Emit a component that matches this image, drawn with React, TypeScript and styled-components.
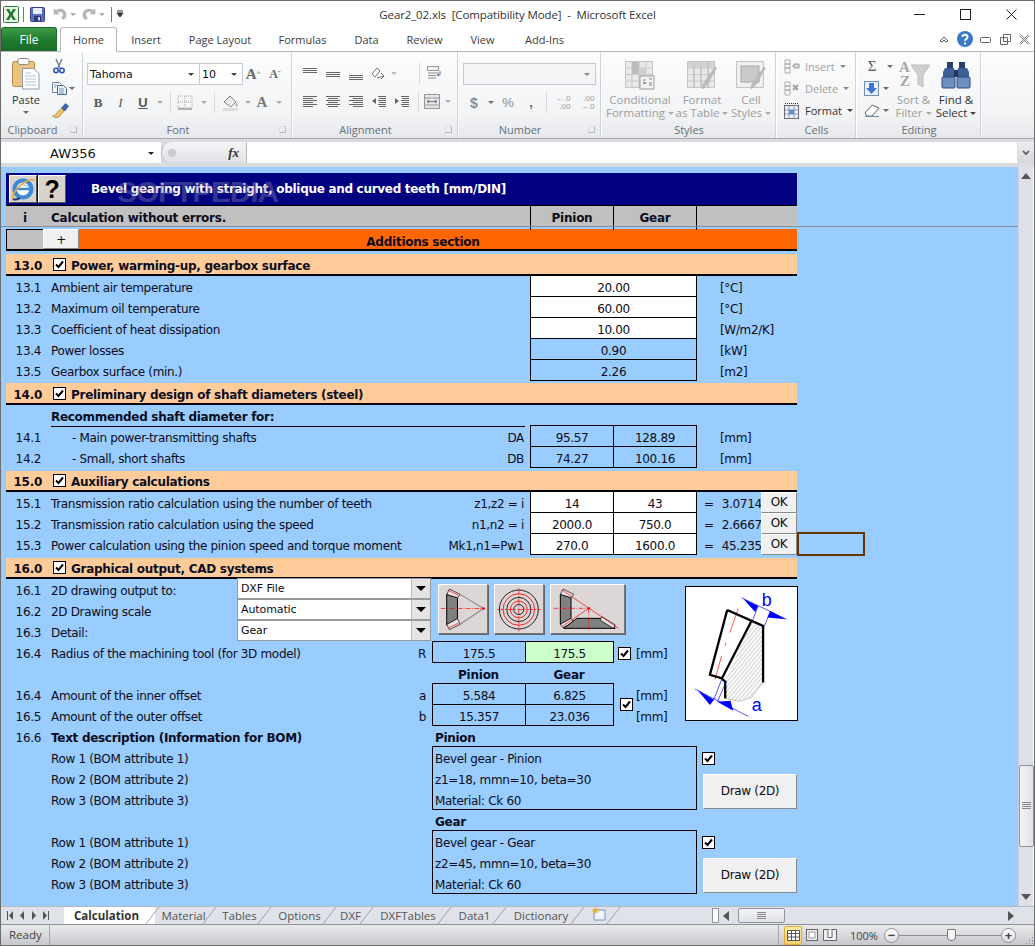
import React from 'react'
import styled, { createGlobalStyle } from 'styled-components'

const GlobalStyle = createGlobalStyle`
  * { box-sizing: border-box; }
  html, body { margin: 0; padding: 0; overflow: hidden; background: #fff; }
  body { font-family: "Open Sans", "Noto Sans", sans-serif; }
`

const Win = styled.div`
  width: 1035px;
  height: 946px;
  border: 1px solid #6d6d6d;
  display: flex;
  flex-direction: column;
  background: #fff;
  overflow: hidden;
`

/* ---------- title bar ---------- */
const TitleBar = styled.div`
  height: 26px;
  flex: none;
  display: grid;
  grid-template-columns: 1fr auto 1fr;
  align-items: center;
  background: #fff;
`
const Quick = styled.div`
  display: flex;
  align-items: center;
  height: 26px;
`
const TitleText = styled.div`
  font-size: 11.5px;
  letter-spacing: -0.12px;
  color: #333;
  white-space: pre;
`
const WinControls = styled.div`
  display: flex;
  justify-content: flex-end;
  height: 26px;
`
const WinBtn = styled.div`
  width: 46px;
  display: flex;
  align-items: center;
  justify-content: center;
`

/* ---------- slots used for every small ribbon item ---------- */
const Slot = styled.div<{ $w: number; $dim?: boolean }>`
  width: ${p => p.$w}px;
  height: 21px;
  flex: none;
  display: flex;
  align-items: center;
  justify-content: center;
  color: ${p => (p.$dim ? '#9a9a9a' : '#444')};
`
const Caret = styled.span<{ $c?: string; $big?: boolean }>`
  display: inline-block;
  width: 0;
  height: 0;
  vertical-align: middle;
  border-left: ${p => (p.$big ? 5 : 3)}px solid transparent;
  border-right: ${p => (p.$big ? 5 : 3)}px solid transparent;
  border-top: ${p => (p.$big ? 5 : 3)}px solid ${p => p.$c || '#6a6a6a'};
`
const Sep = styled.div<{ $w: number }>`
  width: ${p => p.$w}px;
  height: 21px;
  flex: none;
  border-right: 1px solid #d6d8dc;
`
const FontGlyph = styled.span<{ $size: number; $bold?: boolean; $italic?: boolean; $under?: boolean; $serif?: boolean; $c?: string }>`
  font-family: ${p => (p.$serif ? '"Liberation Serif", serif' : '"Liberation Sans", sans-serif')};
  font-size: ${p => p.$size}px;
  font-weight: ${p => (p.$bold ? 700 : 400)};
  font-style: ${p => (p.$italic ? 'italic' : 'normal')};
  text-decoration: ${p => (p.$under ? 'underline' : 'none')};
  color: ${p => p.$c || '#555'};
  line-height: 1;
`

/* ---------- ribbon tabs ---------- */
const TabStrip = styled.div`
  height: 25px;
  flex: none;
  display: flex;
  align-items: stretch;
  background: #fff;
  border-bottom: 1px solid #b4b7bc;
  position: relative;
`
const FileTab = styled.div`
  width: 56px;
  margin-right: 3px;
  background: linear-gradient(#3f9a47, #1e7a2c 55%, #1c6a28);
  color: #fff;
  border: 1px solid #1c6a28;
  border-bottom: none;
  border-radius: 3px 3px 0 0;
  font-size: 12px;
  display: flex;
  align-items: center;
  justify-content: center;
`
const RibbonTab = styled.div<{ $w: number; $on?: boolean }>`
  width: ${p => p.$w}px;
  flex: none;
  font-size: 11px;
  color: #3c3c3c;
  display: flex;
  align-items: center;
  justify-content: center;
  background: ${p => (p.$on ? '#fff' : 'transparent')};
  border: ${p => (p.$on ? '1px solid #b4b7bc' : 'none')};
  border-bottom: ${p => (p.$on ? '1px solid #fff' : 'none')};
  border-radius: 3px 3px 0 0;
  height: ${p => (p.$on ? '25px' : 'auto')};
`
const HelpIcons = styled.div`
  margin-left: auto;
  display: flex;
  align-items: center;
  padding-right: 4px;
`

/* ---------- ribbon ---------- */
const Ribbon = styled.div`
  height: 87px;
  flex: none;
  display: flex;
  background: linear-gradient(#fbfcfc, #f3f4f6 70%, #e6e8ec);
  border-bottom: 1px solid #a6a9ae;
`
const Group = styled.div<{ $w: number }>`
  width: ${p => p.$w}px;
  flex: none;
  display: flex;
  flex-direction: column;
  border-right: 1px solid #d0d3d8;
  box-shadow: 1px 0 0 #fff;
`
const GroupBody = styled.div<{ $pl?: number }>`
  height: 69px;
  flex: none;
  padding-left: ${p => p.$pl || 0}px;
  display: flex;
`
const GroupLabel = styled.div<{ $launch?: boolean }>`
  flex: 1;
  position: relative;
  text-align: center;
  font-size: 11px;
  line-height: 17px;
  padding-left: ${p => (p.$launch ? 0 : 2)}px;
  padding-right: ${p => (p.$launch ? 18 : 0)}px;
  color: #66707c;
`
const Launcher = styled.span`
  position: absolute;
  right: 5px;
  top: 5px;
  width: 7px;
  height: 7px;
  border: 1px solid #b7babf;
  border-top-color: #dcdee2;
  border-left-color: #dcdee2;
`
const Stack = styled.div<{ $gap?: number; $top?: number }>`
  display: flex;
  flex-direction: column;
  gap: ${p => p.$gap || 0}px;
  padding-top: ${p => p.$top || 0}px;
`
const SmallStack = styled(Stack)`
  margin-left: 3px;
`
const NarrowStack = styled(Stack)`
  width: 28px;
`
const Line = styled.div`
  display: flex;
  align-items: center;
`
const PasteBtn = styled.div`
  width: 44px;
  margin-left: 3px;
  display: flex;
  flex-direction: column;
  align-items: center;
  padding-top: 6px;
  font-size: 11px;
  color: #333;
`
const PasteText = styled.div`
  margin-top: 3px;
  line-height: 14px;
  margin-bottom: 4px;
`
const Combo = styled.div<{ $w: number; $off?: boolean }>`
  width: ${p => p.$w}px;
  height: 22px;
  flex: none;
  background: ${p => (p.$off ? '#f3f4f6' : '#fff')};
  border: 1px solid #c7cad0;
  margin-right: -1px;
  display: flex;
  align-items: center;
  justify-content: space-between;
  padding: 0 5px 0 2px;
  font-family: "DejaVu Sans", sans-serif;
  font-size: 11px;
  color: #111;
`
const BigBtn = styled.div<{ $w: number; $dim?: boolean }>`
  width: ${p => p.$w}px;
  flex: none;
  display: flex;
  flex-direction: column;
  align-items: center;
  padding-top: 7px;
  font-size: 11.5px;
  line-height: 13px;
  color: ${p => (p.$dim ? '#9c9c9c' : '#333')};
`
const BigIcon = styled.div`
  height: 32px;
  margin-bottom: 2px;
  display: flex;
  align-items: center;
`
const BigText = styled.div`
  white-space: nowrap;
  text-align: center;
`
const CellLine = styled.div<{ $dim?: boolean; $gap?: number }>`
  height: 22px;
  display: flex;
  align-items: center;
  gap: ${p => p.$gap || 5}px;
  font-size: 11px;
  color: ${p => (p.$dim ? '#a0a0a0' : '#333')};
`
const DecimalGlyph = styled.span`
  font-family: "Liberation Sans", sans-serif;
  font-size: 8px;
  line-height: 8px;
  color: #999;
  text-align: right;
`

/* ---------- formula bar ---------- */
const Strip = styled.div<{ $h: number }>`
  height: ${p => p.$h}px;
  flex: none;
  background: #d9dbdf;
`
const FormulaBar = styled.div`
  height: 21px;
  flex: none;
  display: flex;
  background: #d9dbdf;
`
const NameBox = styled.div`
  width: 160px;
  flex: none;
  background: #fff;
  padding: 1px 7px 0 49px;
  display: flex;
  align-items: center;
  justify-content: space-between;
  font-family: "DejaVu Sans", sans-serif;
  font-size: 13px;
  color: #111;
`
const FxPill = styled.div`
  width: 85px;
  flex: none;
  background: linear-gradient(#f4f5f7, #dfe1e5);
  border-radius: 10px 0 0 10px;
  border-left: 1px solid #b4b7bc;
  display: flex;
  align-items: center;
  justify-content: space-between;
  padding: 0 7px 0 6px;
`
const FxDot = styled.span`
  width: 8px;
  height: 8px;
  border-radius: 50%;
  background: #c9cbcf;
`
const FxText = styled.span`
  font-family: "Liberation Serif", serif;
  font-style: italic;
  font-weight: 700;
  font-size: 13px;
  color: #333;
`
const FormulaInput = styled.div`
  flex: 1;
  background: #fff;
  border-left: 1px solid #b4b7bc;
`
const FormulaExpand = styled.div`
  width: 16px;
  flex: none;
  margin-left: 1px;
  background: linear-gradient(#eceef1, #d5d8dc);
  display: flex;
  align-items: center;
  justify-content: center;
`

/* ---------- worksheet ---------- */
const SheetWrap = styled.div`
  height: 739px;
  flex: none;
  display: flex;
  position: relative;
`
const Sheet = styled.div`
  flex: 1;
  background: #99ccff;
  padding: 6px 0 0 5px;
  position: relative;
  overflow: hidden;
  font-family: "DejaVu Sans", sans-serif;
  font-size: 12px;
  color: #0c0c20;
  letter-spacing: -0.33px;
`
const FrozenLine = styled.div`
  position: absolute;
  left: 0;
  right: 0;
  top: 59px;
  height: 1px;
  background: #8b8f96;
`
const Watermark = styled.div`
  position: absolute;
  left: 116px;
  top: 8px;
  font-family: "Liberation Sans", sans-serif;
  font-weight: 700;
  font-size: 30px;
  letter-spacing: -1.2px;
  line-height: 34px;
  color: rgba(130, 130, 175, 0.42);
`
const Board = styled.div`
  width: 791px;
`
const TitleRow = styled.div`
  height: 33px;
  background: #000080;
  border-bottom: 1px solid #000;
  display: flex;
  align-items: center;
  padding-left: 3px;
`
const FaceBtn = styled.div`
  width: 28px;
  height: 28px;
  margin-right: 1px;
  background: #d8d4cc;
  border: 1px solid;
  border-color: #fff #555 #555 #fff;
  display: flex;
  align-items: center;
  justify-content: center;
  font-family: "Liberation Sans", sans-serif;
  font-weight: 700;
  font-size: 25px;
  color: #000;
`
const TitleCaption = styled.div`
  margin-left: 24px;
  font-weight: 700;
  color: #fff;
  letter-spacing: -0.3px;
`
const HeadRow = styled.div`
  height: 21px;
  background: #c0c0c0;
  display: grid;
  grid-template-columns: 45px 479px 83px 83px 1fr;
  line-height: 24px;
  font-weight: 700;
  letter-spacing: -0.25px;
`
const HeadInfo = styled.div`
  text-align: center;
  padding-right: 7px;
`
const HeadCol = styled.div`
  text-align: center;
  border-left: 1px solid #000;
`
const AddRow = styled.div`
  margin-top: 2px;
  height: 22px;
  display: flex;
  background: #ff6600;
  border-bottom: 2px solid #000;
`
const AddGrey = styled.div`
  width: 37px;
  background: #c0c0c0;
  border-top: 1px solid #000;
  border-left: 1px solid #000;
`
const AddBtn = styled.div`
  width: 36px;
  background: #f0f0f0;
  border: 1px solid;
  border-color: #fff #888 #888 #fff;
  text-align: center;
  line-height: 20px;
`
const AddTitle = styled.div`
  flex: 1;
  text-align: center;
  font-weight: 700;
  padding-right: 30px;
  line-height: 26px;
  letter-spacing: -0.25px;
`
const Section = styled.div<{ $gap: number; $h: number }>`
  margin-top: ${p => p.$gap}px;
  height: ${p => p.$h}px;
  background: #ffcc99;
  border-bottom: 2px solid #000;
  display: flex;
  align-items: center;
  font-weight: 700;
  letter-spacing: -0.28px;
`
const SectionNum = styled.div`
  width: 47px;
  text-align: right;
  padding-right: 11px;
  padding-top: 3px;
`
const SectionTitle = styled.div`
  margin-left: 5px;
  padding-top: 3px;
`
const CheckBox = styled.span`
  width: 13px;
  height: 13px;
  flex: none;
  background: #fff;
  border: 1px solid #000;
  display: inline-flex;
  align-items: center;
  justify-content: center;
`
const LowCheck = styled(CheckBox)`
  margin-top: 18px;
  margin-right: -2px;
`
const Row = styled.div`
  height: 21px;
  line-height: 24px;
  display: grid;
  grid-template-columns: 45px 479px 83px 83px 1fr;
  position: relative;
  white-space: nowrap;
`
const Num = styled.div`
  text-align: right;
  padding-right: 10px;
`
const Label = styled.div<{ $indent?: number }>`
  display: flex;
  justify-content: space-between;
  padding-right: 6px;
  padding-left: ${p => p.$indent || 0}px;
`
const SubHead = styled.div`
  font-weight: 700;
  letter-spacing: -0.3px;
  grid-column: span 2;
  height: 22px;
  border-bottom: 1px solid #000;
  width: 474px;
`
const Cell = styled.div<{ $span?: number; $fill?: string }>`
  grid-column: span ${p => p.$span || 1};
  height: 22px;
  margin-top: -1px;
  margin-right: -1px;
  border: 1px solid #000;
  background: ${p => p.$fill || 'transparent'};
  text-align: center;
  line-height: 24px;
`
const Unit = styled.div`
  padding-left: 24px;
`
const Result = styled.div`
  display: flex;
  padding-left: 8px;
  gap: 8px;
`
const OkBtn = styled.div`
  position: absolute;
  right: 0;
  top: 0;
  width: 36px;
  height: 21px;
  background: #f0f0f0;
  border: 1px solid;
  border-color: #fff #888 #888 #fff;
  text-align: center;
  line-height: 19px;
`
const ActiveCell = styled.div`
  position: absolute;
  left: 791px;
  top: -2px;
  width: 68px;
  height: 24px;
  border: 2px solid #663300;
`

/* section 16 */
const CadBlock = styled.div`
  display: flex;
  align-items: flex-start;
`
const CadLeft = styled.div`
  width: 680px;
  flex: none;
`
const CadTop = styled.div`
  display: flex;
  height: 63px;
`
const ComboRow = styled.div`
  height: 21px;
  line-height: 24px;
  display: grid;
  grid-template-columns: 45px 186px 194px;
  white-space: nowrap;
`
const SheetCombo = styled.div`
  height: 21px;
  margin-top: -1px;
  background: #fff;
  border: 1px solid #9a9a9a;
  display: flex;
  justify-content: space-between;
  font-size: 11px;
  letter-spacing: -0.1px;
  line-height: 20px;
  padding-left: 3px;
`
const ComboArrow = styled.div`
  width: 19px;
  background: #e4e4e4;
  border-left: 1px solid #bbb;
  display: flex;
  align-items: center;
  justify-content: center;
`
const ShapeBtns = styled.div`
  margin: 5px 0 0 7px;
  display: flex;
  gap: 6px;
`
const ShapeBtn = styled.div`
  height: 50px;
  background: #dcd6d6;
  border: 1px solid;
  border-color: #fff #777 #777 #fff;
  box-shadow: 1px 1px 0 #666;
  display: flex;
`
const ToolRow = styled.div`
  height: 21px;
  line-height: 24px;
  display: grid;
  grid-template-columns: 45px 381px 93px 88px 1fr;
  white-space: nowrap;
`
const HeadMid = styled.div`
  font-weight: 700;
  text-align: center;
  letter-spacing: -0.25px;
`
const UnitInline = styled.div<{ $pl: number; $gap?: number }>`
  display: flex;
  align-items: center;
  gap: ${p => p.$gap || 5}px;
  padding-left: ${p => p.$pl}px;
  padding-top: 2px;
  height: 21px;
`
const Diagram = styled.div`
  margin-top: 7px;
  width: 113px;
  height: 135px;
  background: #fff;
  border: 1px solid #000;
  margin-left: -1px;
  display: flex;
`
const BomRow = styled.div`
  height: 21px;
  line-height: 24px;
  display: grid;
  grid-template-columns: 45px 381px 1fr;
  white-space: nowrap;
`
const BomBlock = styled.div`
  display: flex;
  align-items: flex-start;
`
const BomLabels = styled.div`
  width: 426px;
  flex: none;
`
const BomLabelRow = styled.div`
  height: 21px;
  line-height: 24px;
  padding-left: 45px;
`
const BomBox = styled.div`
  width: 265px;
  height: 64px;
  flex: none;
  margin-top: -1px;
  border: 1px solid #000;
  padding: 2px 0 0 2px;
  line-height: 21px;
`
const BomSide = styled.div`
  flex: none;
  padding: 5px 0 0 5px;
  display: flex;
  flex-direction: column;
  align-items: flex-start;
`
const DrawBtn = styled.div`
  width: 94px;
  height: 35px;
  margin: 9px 0 0 1px;
  background: #f0f0f0;
  border: 1px solid;
  border-color: #fff #888 #888 #fff;
  text-align: center;
  line-height: 33px;
`
const BomHead = styled.div`
  font-weight: 700;
  letter-spacing: -0.3px;
`
const BomTitle = styled(BomHead)`
  padding-left: 3px;
`

/* vertical scroll bar */
const VScroll = styled.div`
  width: 15px;
  flex: none;
  margin-right: 1px;
  background: #dde0e7;
  display: flex;
  flex-direction: column;
  align-items: center;
  border-left: 1px solid #cfd2d8;
`
const ScrollEnd = styled.div`
  height: 18px;
  flex: none;
  display: flex;
  align-items: center;
  justify-content: center;
`
const VTrack = styled.div`
  flex: 1;
  width: 100%;
  padding-top: 580px;
`
const VThumb = styled.div`
  width: 15px;
  height: 82px;
  background: linear-gradient(90deg, #f3f4f7, #dfe2e8);
  border: 1px solid #8e939c;
  border-radius: 2px;
  display: flex;
  align-items: center;
  justify-content: center;
`

/* sheet tabs */
const TabsBar = styled.div`
  height: 18px;
  flex: none;
  display: flex;
  background: #dfe2e8;
  border-top: 1px solid #b6b9bf;
  font-size: 11.5px;
  color: #444;
`
const NavArrows = styled.div`
  width: 63px;
  flex: none;
  display: flex;
  align-items: center;
  gap: 4px;
  padding-left: 5px;
`
const SheetTab = styled.div<{ $w: number; $on?: boolean }>`
  width: ${p => p.$w}px;
  flex: none;
  position: relative;
  text-align: center;
  line-height: 17px;
  padding-right: ${p => (p.$on ? 6 : 0)}px;
  font-weight: ${p => (p.$on ? 700 : 400)};
  background: ${p => (p.$on ? '#fff' : 'transparent')};
  color: ${p => (p.$on ? '#333' : '#555')};
  &::after {
    content: '';
    position: absolute;
    right: 2px;
    top: 0;
    width: 1px;
    height: 17px;
    background: #9ea2a8;
    transform: skewX(-38deg);
  }
`
const TabFill = styled.div`
  flex: 1;
  min-width: 0;
`
const Splitter = styled.div`
  width: 7px;
  height: 15px;
  margin-top: 1px;
  background: #fff;
  border: 1px solid #8e939c;
`
const HScroll = styled.div`
  width: 315px;
  flex: none;
  display: flex;
  align-items: center;
`
const HThumb = styled.div`
  width: 47px;
  height: 15px;
  margin-left: 5px;
  background: linear-gradient(#f3f4f7, #dfe2e8);
  border: 1px solid #8e939c;
  border-radius: 2px;
  display: flex;
  align-items: center;
  justify-content: center;
`

/* status bar */
const StatusBar = styled.div`
  flex: 1;
  display: flex;
  align-items: center;
  background: linear-gradient(#e9eaec, #c6c8cc);
  border-top: 1px solid #8f9196;
  font-size: 11.5px;
  color: #444;
`
const Ready = styled.div`
  width: 49px;
  height: 100%;
  padding-left: 8px;
  line-height: 20px;
  border-right: 1px solid #a4a6aa;
`
const ViewGroup = styled.div`
  margin-left: auto;
  height: 100%;
  display: flex;
  align-items: center;
  border-left: 1px solid #a4a6aa;
  padding-left: 5px;
`
const ViewBtn = styled.div<{ $on?: boolean }>`
  width: 18px;
  height: 19px;
  margin-right: ${p => (p.$on ? 1 : 0)}px;
  border-radius: 2px;
  border: ${p => (p.$on ? '1px solid #e0a93c' : '1px solid transparent')};
  background: ${p => (p.$on ? 'linear-gradient(#fde9a8,#fbd26a)' : 'transparent')};
  display: flex;
  align-items: center;
  justify-content: center;
`
const Zoom = styled.div`
  width: 34px;
  margin-left: 11px;
  font-size: 11px;
  color: #444;
`
const ZoomBtn = styled.div`
  width: 15px;
  height: 15px;
  flex: none;
  border-radius: 50%;
  border: 1px solid #8d9095;
  background: linear-gradient(#fff, #dcdee2);
  display: flex;
  align-items: center;
  justify-content: center;
  font-weight: 700;
  font-size: 13px;
  line-height: 1;
  color: #444;
`
const ZoomTrack = styled.div`
  width: 102px;
  height: 1px;
  background: #8d9095;
  position: relative;
`
const ZoomThumb = styled.div`
  position: absolute;
  left: 48px;
  top: -6px;
  width: 9px;
  height: 12px;
  background: #f5f5f5;
  border: 1px solid #777;
  border-radius: 1px 1px 4px 4px;
`
const Grip = styled.div`
  width: 18px;
  height: 100%;
  display: flex;
  align-items: flex-end;
  justify-content: flex-end;
`
const QuickSep = styled.span<{ $ml: number; $mr: number }>`
  width: 1px;
  height: 15px;
  background: #777;
  margin: 0 ${p => p.$mr}px 0 ${p => p.$ml}px;
`

/* ---------- icons ---------- */
const ExcelLogo = () => (
  <svg width="16" height="17" viewBox="0 0 16 17" style={{ margin: '0 3px 0 2px' }}>
    <rect x=".5" y=".5" width="15" height="16" rx="1" fill="#eaf4e6" stroke="#2f7a37" />
    <path d="M3 3h3l2 3.5L10 3h3L9.6 8.5 13 14h-3L8 10.5 6 14H3l3.4-5.5z" fill="#1f7a2d" />
  </svg>
)
const SaveIcon = () => (
  <svg width="15" height="15" viewBox="0 0 15 15">
    <rect x=".5" y=".5" width="14" height="14" rx="1" fill="#5a6fc0" stroke="#36418a" />
    <rect x="3" y="1" width="9" height="6" fill="#e9eefb" />
    <rect x="4" y="9" width="7" height="5.5" fill="#2f3a7c" />
    <rect x="8" y="10" width="2" height="3.5" fill="#cfd6ee" />
  </svg>
)
const UndoIcon = ({ flip }: { flip?: boolean }) => (
  <svg width="14" height="14" viewBox="0 0 14 14" style={flip ? { transform: 'scaleX(-1)' } : undefined}>
    <path d="M1 2v5h5L4.3 5.3C6 4 9 4.2 10 6.5c.6 1.6 0 3.4-1.6 4.6l2.4 1.5C13 11 13.7 8 12.5 5.3 11 2 6.5 1 3.2 3.6z" fill="#b6b8bb" stroke="#a3a5a8" strokeWidth=".5" />
  </svg>
)
const Cut = () => (
  <svg width="12" height="15" viewBox="0 0 12 15">
    <path d="M3 0l4 9M9 0L5 9" stroke="#6d7f95" strokeWidth="1.4" fill="none" />
    <circle cx="3" cy="11.5" r="2.2" fill="#fff" stroke="#2a50c0" strokeWidth="1.5" />
    <circle cx="9" cy="11.5" r="2.2" fill="#fff" stroke="#2a50c0" strokeWidth="1.5" />
  </svg>
)
const Copy = () => (
  <svg width="15" height="13" viewBox="0 0 15 13">
    <path d="M.5.5h7l2 2v8h-9z" fill="#fff" stroke="#6a86b0" />
    <path d="M5.5 3.5h6l3 3v6h-9z" fill="#eaf1fb" stroke="#4a6a9c" />
    <path d="M7 7h5M7 9h5M7 11h5M2 3h3M2 5h2" stroke="#7d94b8" />
  </svg>
)
const Painter = () => (
  <svg width="17" height="15" viewBox="0 0 17 15">
    <path d="M10 5l2 3-5 6c-2 1-5 .5-6.5-1 2 0 3-1 4-3z" fill="#eac668" stroke="#a07c2c" strokeWidth=".7" />
    <path d="M9.5 5l4-4.5 3 2.5-3.5 5z" fill="#3e62b0" stroke="#2b4a8a" strokeWidth=".6" />
  </svg>
)
const PasteIcon = () => (
  <svg width="28" height="32" viewBox="0 0 28 32">
    <rect x=".5" y="3.5" width="22" height="25" rx="2" fill="#edc27a" stroke="#b38a4a" />
    <rect x="6" y=".5" width="11" height="6" rx="1.5" fill="#fafafa" stroke="#8d8d8d" />
    <path d="M10.5 10.5h11l5.5 5v15.5h-16.5z" fill="#fff" stroke="#8d9bb0" />
    <path d="M13 15h6M13 18h11M13 21h11M13 24h11M13 27h11" stroke="#b7c1d0" />
  </svg>
)
const Bars = ({ kind }: { kind: 'top' | 'mid' | 'bot' | 'l' | 'c' | 'r' | 'in' | 'out' }) => {
  const ys = kind === 'top' ? [2, 4, 6] : kind === 'mid' ? [6, 8, 10] : kind === 'bot' ? [9, 11, 13] : [2, 4, 6, 8, 10, 12]
  const long = (i: number) => i % 2 === 0
  return (
    <svg width="16" height="15" viewBox="0 0 16 15">
      {ys.map((y, i) => {
        let x1 = 1
        let x2 = 15
        if (ys.length > 3 && !long(i)) {
          if (kind === 'l') x2 = 11
          if (kind === 'c') { x1 = 3; x2 = 13 }
          if (kind === 'r') x1 = 5
        }
        if (kind === 'in' || kind === 'out') {
          x1 = 7
          if (!long(i)) x1 = 8
        }
        return <line key={y} x1={x1} x2={x2} y1={y + .5} y2={y + .5} stroke="#666" />
      })}
      {kind === 'in' && <path d="M5 4L1 7l4 3z" fill="#666" />}
      {kind === 'out' && <path d="M1 4l4 3-4 3z" fill="#666" />}
    </svg>
  )
}
const Orient = () => (
  <svg width="16" height="15" viewBox="0 0 16 15">
    <path d="M2 8l5-6 3 3-5 6z" fill="none" stroke="#777" />
    <path d="M7 12l7-2M11 7l3 3-3 3" stroke="#777" fill="none" />
  </svg>
)
const Wrap = () => (
  <svg width="16" height="15" viewBox="0 0 16 15">
    <rect x=".5" y=".5" width="11" height="4" fill="#eef0f3" stroke="#999" />
    <path d="M1 7h11M1 9.5h8M1 12h8" stroke="#8a8a8a" />
    <path d="M13 5v4h-2M12 8l-2 1 2 1" stroke="#5a7fb0" fill="none" />
  </svg>
)
const Merge = () => (
  <svg width="16" height="15" viewBox="0 0 16 15">
    <rect x=".5" y=".5" width="15" height="14" fill="#e4e6ea" stroke="#999" />
    <path d="M1 4h14M1 11h14" stroke="#999" />
    <path d="M3 7.5h10M3 7.5l2-1.5M3 7.5l2 1.5M13 7.5l-2-1.5M13 7.5l-2 1.5" stroke="#777" fill="none" />
  </svg>
)
const Borders = () => (
  <svg width="16" height="15" viewBox="0 0 16 15">
    <rect x="1" y="1" width="14" height="12" fill="none" stroke="#aaa" strokeDasharray="1 1" />
    <path d="M8 1v12M1 7h14" stroke="#aaa" strokeDasharray="1 1" />
    <path d="M1 14h14" stroke="#777" />
  </svg>
)
const Fill = () => (
  <svg width="17" height="17" viewBox="0 0 17 17">
    <path d="M2 8l6-6 6 6-5 5z" fill="#e8e8ea" stroke="#888" />
    <path d="M14 8c1 2 2 3 1.5 4s-2 .5-2-.5z" fill="#aaa" />
    <rect x="1" y="14" width="15" height="3" fill="#dcdcde" />
  </svg>
)
const GridBase = ({ children }: { children?: React.ReactNode }) => (
  <svg width="30" height="29" viewBox="0 0 30 29">
    <rect x=".5" y=".5" width="27" height="26" fill="#e9e9e9" stroke="#c4c4c4" />
    <path d="M7 1v25M14 1v25M21 1v25M1 7h26M1 13.5h26M1 20h26" stroke="#c9c9c9" />
    {children}
  </svg>
)
const Brush = () => (
  <path d="M28 6l1.5 1-9 16-5 5c-1-2 0-5 2-7z" fill="#bdbdbd" stroke="#a9a9a9" strokeWidth=".5" />
)
const CondIcon = () => (
  <GridBase>
    <rect x="7" y="1" width="7" height="12" fill="#bdbdbd" />
    <rect x="14" y="7" width="7" height="13" fill="#cfcfcf" />
    <rect x="15" y="15" width="14" height="13" fill="#f3f3f3" stroke="#9a9a9a" />
    <path d="M18 19h3M18 21l3 1-3 1M24 18l3 0M24 22h3M24 24h3" stroke="#888" fill="none" />
  </GridBase>
)
const TableIcon = () => (
  <GridBase>
    <rect x="1" y="1" width="26" height="6" fill="#d2d2d2" />
    <path d="M7 1v25M14 1v25M21 1v25" stroke="#bcbcbc" />
    <Brush />
  </GridBase>
)
const StylesIcon = () => (
  <svg width="30" height="29" viewBox="0 0 30 29">
    <rect x=".5" y=".5" width="27" height="26" fill="#efefef" stroke="#c4c4c4" />
    <rect x="5" y="5" width="18" height="16" fill="#c9c9c9" stroke="#aaa" />
    <Brush />
  </svg>
)
const InsertIcon = () => (
  <svg width="16" height="15" viewBox="0 0 16 15">
    <path d="M1 1h5v4H1zM1 5h5v4H1zM1 9h5v5H1z" fill="#fff" stroke="#a8a8a8" />
    <path d="M8 7h2M10 5h5v4h-5z" stroke="#9a9a9a" fill="#cfd9e8" />
  </svg>
)
const DeleteIcon = () => (
  <svg width="16" height="15" viewBox="0 0 16 15">
    <path d="M1 1h5v4H1zM1 5h5v4H1zM1 9h5v5H1z" fill="#fff" stroke="#a8a8a8" />
    <path d="M9 4l5 5M14 4l-5 5" stroke="#a3a3a3" strokeWidth="2" />
  </svg>
)
const FormatIcon = () => (
  <svg width="16" height="17" viewBox="0 0 16 17">
    <rect x=".5" y="3.5" width="14" height="13" fill="#eef3fb" stroke="#667" />
    <path d="M5 3v14M10 3v14M1 8h14M1 12h14" stroke="#8b97aa" />
    <rect x="5" y="8" width="5" height="4" fill="#5c8ed8" />
    <path d="M1 1.5h13" stroke="#333" strokeDasharray="1 1" />
  </svg>
)
const FillDown = () => (
  <svg width="15" height="15" viewBox="0 0 15 15">
    <rect x=".5" y=".5" width="14" height="14" fill="#eaf1fb" stroke="#6f8cb5" />
    <path d="M5 2h5v5h3l-5.5 6L2 7h3z" fill="#3a76d4" />
  </svg>
)
const Eraser = () => (
  <svg width="16" height="13" viewBox="0 0 16 13">
    <path d="M1 9l7-8 7 3-7 8H3z" fill="#fff" stroke="#666" />
    <path d="M1 12.5h14" stroke="#6f8cb5" />
  </svg>
)
const SortIcon = () => (
  <svg width="32" height="32" viewBox="0 0 32 32">
    <text x="1" y="13" fontFamily="Liberation Serif, serif" fontSize="15" fontWeight="700" fill="#a6a6a6">A</text>
    <text x="2" y="27" fontFamily="Liberation Serif, serif" fontSize="15" fontWeight="700" fill="#a6a6a6">Z</text>
    <path d="M13 6h19l-7 10v12l-5-3v-9z" fill="#cfcfcf" stroke="#bdbdbd" />
  </svg>
)
const FindIcon = () => (
  <svg width="30" height="28" viewBox="0 0 30 28">
    <rect x="6" y="1" width="6" height="6" fill="#2b3f66" />
    <rect x="18" y="1" width="6" height="6" fill="#2b3f66" />
    <path d="M4 7h9l1 4v5H2v-5z" fill="#3f5f96" />
    <path d="M17 7h9l2 4v5H16v-5z" fill="#3f5f96" />
    <rect x="13" y="9" width="4" height="7" fill="#24365a" />
    <rect x="1" y="16" width="13" height="11" rx="1" fill="#6f8fc2" stroke="#2f4a7c" />
    <rect x="16" y="16" width="13" height="11" rx="1" fill="#6f8fc2" stroke="#2f4a7c" />
  </svg>
)
const Check = () => (
  <svg width="9" height="9" viewBox="0 0 9 9">
    <path d="M1 4.5l2.5 2.5L8 1.5" fill="none" stroke="#000" strokeWidth="2" />
  </svg>
)
const IeIcon = () => (
  <svg width="24" height="24" viewBox="0 0 24 24">
    <circle cx="12" cy="12" r="8.5" fill="#fff" stroke="#3d8bd8" strokeWidth="4.2" />
    <path d="M6 12h13" stroke="#3d8bd8" strokeWidth="2.5" />
    <path d="M12 8c3 0 5 1 5.5 3" stroke="#8ad2f5" strokeWidth="1.5" fill="none" />
    <path d="M2 22c-2-3 4-13 14-18 4-2 7-2 7 0" fill="none" stroke="#e8a838" strokeWidth="1.5" />
    <path d="M2 22c2 1 5 0 7-1" fill="none" stroke="#23408c" strokeWidth="2" />
  </svg>
)
const MiniLines = () => (
  <svg width="9" height="8" viewBox="0 0 9 8">
    <path d="M0 .5h9M0 2.5h9M0 4.5h9M0 6.5h9" stroke="#888" />
  </svg>
)
const ArrowPiece = ({ dir, stop }: { dir: 'l' | 'r'; stop?: boolean }) => (
  <svg width="8" height="9" viewBox="0 0 8 9">
    {dir === 'l' ? <path d={stop ? 'M7 0v9L3 4.5z' : 'M6 0v9L2 4.5z'} fill="#555" /> : <path d={stop ? 'M1 0v9l4-4.5z' : 'M2 0v9l4-4.5z'} fill="#555" />}
    {stop && <rect x={dir === 'l' ? 1 : 6} y="0" width="1" height="9" fill="#555" />}
  </svg>
)
const ConeLeft = () => (
  <g>
    <path d="M80 58l32 10v62l-32 18z" fill="#808080" stroke="#000" strokeWidth="3" />
    <path d="M88 42l32 16-8 10-32-10zM88 163l32-16-8-17-32 18z" fill="#e8e2e2" stroke="#000" strokeWidth="2" />
    <path d="M120 58l70 42-70 47" fill="none" stroke="#8a8a8a" strokeWidth="3" />
    <path d="M62 100h130" stroke="#f00" strokeWidth="2" strokeDasharray="14 4 3 4" />
    <path d="M85 46l30 15M85 158l30-14" stroke="#f00" strokeWidth="2" />
    <circle cx="190" cy="100" r="4" fill="#f00" />
  </g>
)
const Shape1 = () => (
  <svg width="48" height="48" viewBox="57 30 143 143"><ConeLeft /></svg>
)
const Shape2 = () => (
  <svg width="48" height="48" viewBox="225 30 143 143">
    {[58, 36, 15].map(r => <circle key={r} cx="296" cy="103" r={r} fill="none" stroke="#000" strokeWidth="2.5" />)}
    {[47, 25].map(r => <circle key={r} cx="296" cy="103" r={r} fill="none" stroke="#f00" strokeWidth="2.5" />)}
    <path d="M232 103h130M296 40v128" stroke="#f00" strokeWidth="2" strokeDasharray="18 4 4 4" />
  </svg>
)
const Shape3 = () => (
  <svg width="73" height="48" viewBox="392 30 219 144">
    <g transform="translate(340 0)">
      <path d="M80 58l32 10v62l-32 18z" fill="#808080" stroke="#000" strokeWidth="3" />
      <path d="M88 42l32 16-8 10-32-10zM88 158l32-16-8-12-32 18z" fill="#e8e2e2" stroke="#000" strokeWidth="2" />
    </g>
    <path d="M430 160l40-30h75l40 30z" fill="#808080" stroke="#000" strokeWidth="3" />
    <path d="M545 125l40 25-6 10-40-25z" fill="#e8e2e2" stroke="#000" strokeWidth="2" />
    <path d="M400 100h105M505 100v65" stroke="#f00" strokeWidth="2" strokeDasharray="14 4 3 4" />
    <path d="M425 45l170 115M425 155l80-55" stroke="#f00" strokeWidth="2" />
    <circle cx="505" cy="100" r="4" fill="#f00" />
  </svg>
)
const GearDiagram = () => (
  <svg width="111" height="133" viewBox="798 33 334 400">
    <defs>
      <pattern id="hatch" width="9" height="9" patternUnits="userSpaceOnUse" patternTransform="rotate(-50)">
        <rect width="9" height="9" fill="#fff" />
        <line x1="0" x2="9" y1="2" y2="2" stroke="#b0b0b0" strokeWidth="2" />
      </pattern>
    </defs>
    <path d="M995 135l35 15v170l-35 45-35 12-45-9v-50z" fill="url(#hatch)" />
    <path d="M1030 320l-35 45-35 12-45-9" fill="none" stroke="#aaa" strokeWidth="2" />
    <path d="M955 98l-25 72M918 200l-3 10M905 240l-20 72" stroke="#f00" strokeWidth="2" fill="none" />
    <path d="M922 102l-52 195 36 11 90-175M922 102l108 48v170M905 308l11 10v50" fill="none" stroke="#000" strokeWidth="7" />
    <g stroke="#0000ff" strokeWidth="2" fill="none">
      <path d="M1015 90l-16 42M1052 105l-18 46M965 65l135 65" />
      <path d="M905 312l-24 62M920 315l-27 62M825 340l160 82" />
    </g>
    <g fill="#0000ff">
      <path d="M970 68l45 22-9 18zM1098 130l-46-25-9 20z" />
      <path d="M832 342l50 30-12 16zM892 378l48 27-8-30z" />
    </g>
    <text x="1026" y="90" fontFamily="Liberation Sans, sans-serif" fontSize="54" fill="#0000ff">b</text>
    <text x="996" y="406" fontFamily="Liberation Sans, sans-serif" fontSize="54" fill="#0000ff">a</text>
  </svg>
)

const sec13 = [
  { n: '13.1', t: 'Ambient air temperature', v: '20.00', u: '[°C]', w: true },
  { n: '13.2', t: 'Maximum oil temperature', v: '60.00', u: '[°C]', w: true },
  { n: '13.3', t: 'Coefficient of heat dissipation', v: '10.00', u: '[W/m2/K]', w: true },
  { n: '13.4', t: 'Power losses', v: '0.90', u: '[kW]', w: false },
  { n: '13.5', t: 'Gearbox surface (min.)', v: '2.26', u: '[m2]', w: false },
]
const sec15 = [
  { n: '15.1', t: 'Transmission ratio calculation using the number of teeth', s: 'z1,z2 = i', a: '14', b: '43', r: '3.0714' },
  { n: '15.2', t: 'Transmission ratio calculation using the speed', s: 'n1,n2 = i', a: '2000.0', b: '750.0', r: '2.6667' },
  { n: '15.3', t: 'Power calculation using the pinion speed and torque moment', s: 'Mk1,n1=Pw1', a: '270.0', b: '1600.0', r: '45.2356' },
]
const tabs = [
  ['Calculation', 91], ['Material', 57], ['Tables', 55], ['Options', 65], ['DXF', 37],
  ['DXFTables', 78], ['Data1', 55], ['Dictionary', 78],
] as const

function SectionHead({ n, t, gap, h }: { n: string; t: string; gap: number; h: number }) {
  return (
    <Section $gap={gap} $h={h}>
      <SectionNum>{n}</SectionNum>
      <CheckBox><Check /></CheckBox>
      <SectionTitle>{t}</SectionTitle>
    </Section>
  )
}

function Bom({ lines }: { lines: string[] }) {
  return (
    <BomBlock>
      <BomLabels>
        {[1, 2, 3].map(i => <BomLabelRow key={i}>{`Row ${i} (BOM attribute ${i})`}</BomLabelRow>)}
      </BomLabels>
      <BomBox>{lines.map(l => <div key={l}>{l}</div>)}</BomBox>
      <BomSide>
        <CheckBox><Check /></CheckBox>
        <DrawBtn>Draw (2D)</DrawBtn>
      </BomSide>
    </BomBlock>
  )
}

export default function App() {
  return (
    <Win>
      <GlobalStyle />
      <TitleBar>
        <Quick>
          <ExcelLogo />
          <QuickSep $ml={1} $mr={6} />
          <SaveIcon />
          <Slot $w={8} />
          <UndoIcon />
          <Slot $w={12}><Caret $c="#aaa" /></Slot>
          <Slot $w={3} />
          <UndoIcon flip />
          <Slot $w={12}><Caret $c="#aaa" /></Slot>
          <QuickSep $ml={3} $mr={4} />
          <svg width="8" height="8" viewBox="0 0 8 8"><path d="M1 1h6M1 3l3 4 3-4z" stroke="#333" fill="#333" /></svg>
        </Quick>
        <TitleText>Gear2_02.xls  [Compatibility Mode]  -  Microsoft Excel</TitleText>
        <WinControls>
          <WinBtn><svg width="11" height="2"><rect width="11" height="1" y="1" fill="#222" /></svg></WinBtn>
          <WinBtn><svg width="11" height="11"><rect x=".5" y=".5" width="10" height="10" fill="none" stroke="#222" /></svg></WinBtn>
          <WinBtn><svg width="11" height="11"><path d="M.5.5l10 10M10.5.5l-10 10" stroke="#222" /></svg></WinBtn>
        </WinControls>
      </TitleBar>

      <TabStrip>
        <FileTab>File</FileTab>
        <RibbonTab $w={57} $on>Home</RibbonTab>
        <RibbonTab $w={58}>Insert</RibbonTab>
        <RibbonTab $w={90}>Page Layout</RibbonTab>
        <RibbonTab $w={75}>Formulas</RibbonTab>
        <RibbonTab $w={53}>Data</RibbonTab>
        <RibbonTab $w={63}>Review</RibbonTab>
        <RibbonTab $w={53}>View</RibbonTab>
        <RibbonTab $w={71}>Add-Ins</RibbonTab>
        <HelpIcons>
          <svg width="10" height="8" viewBox="0 0 10 8" style={{ marginRight: 8 }}><path d="M1 6l4-4 4 4-2 1-2-2-2 2z" fill="#fff" stroke="#555" /></svg>
          <svg width="16" height="16" viewBox="0 0 16 16" style={{ marginRight: 7 }}>
            <circle cx="8" cy="8" r="8" fill="#3a78c8" />
            <path d="M5.5 6c0-3 5-3 5 0 0 2-2.5 2-2.5 3.8M8 11.5v2" stroke="#fff" strokeWidth="2" fill="none" />
          </svg>
          <svg width="11" height="7" style={{ marginRight: 9 }}><rect x=".5" y="1.5" width="10" height="5" fill="#fff" stroke="#666" rx="1" /></svg>
          <svg width="11" height="11" style={{ marginRight: 8 }}><path d="M3.5.5h7v7h-7zM.5 3.5h7v7h-7z" fill="#fff" stroke="#666" /></svg>
          <svg width="11" height="11"><path d="M1 1l9 9M10 1l-9 9" stroke="#777" strokeWidth="2" /><path d="M1 1l9 9M10 1l-9 9" stroke="#fff" /></svg>
        </HelpIcons>
      </TabStrip>

      <Ribbon>
        <Group $w={82}>
          <GroupBody>
            <PasteBtn>
              <PasteIcon />
              <PasteText>Paste</PasteText>
              <Caret />
            </PasteBtn>
            <SmallStack $top={4} $gap={1}>
              <Slot $w={16}><Cut /></Slot>
              <Line><Slot $w={16}><Copy /></Slot><Slot $w={10}><Caret /></Slot></Line>
              <Slot $w={18}><Painter /></Slot>
            </SmallStack>
          </GroupBody>
          <GroupLabel $launch>Clipboard<Launcher /></GroupLabel>
        </Group>

        <Group $w={209}>
          <GroupBody $pl={4}>
            <Stack $top={11} $gap={7}>
              <Line>
                <Combo $w={113}>Tahoma<Caret $c="#444" /></Combo>
                <Combo $w={44}>10<Caret $c="#444" /></Combo>
                <Slot $w={22}><FontGlyph $size={15} $serif $bold $c="#666">A</FontGlyph><FontGlyph $size={8} $c="#666">^</FontGlyph></Slot>
                <Slot $w={22}><FontGlyph $size={12} $serif $bold $c="#666">A</FontGlyph><FontGlyph $size={8} $c="#666">ˇ</FontGlyph></Slot>
              </Line>
              <Line>
                <Slot $w={22}><FontGlyph $size={13} $serif $bold>B</FontGlyph></Slot>
                <Slot $w={23}><FontGlyph $size={13} $serif $italic>I</FontGlyph></Slot>
                <Slot $w={22}><FontGlyph $size={13} $bold $under>U</FontGlyph></Slot>
                <Slot $w={12}><Caret $c="#aaa" /></Slot>
                <Sep $w={5} />
                <Slot $w={28}><Borders /></Slot>
                <Slot $w={10}><Caret $c="#aaa" /></Slot>
                <Sep $w={6} />
                <Slot $w={30}><Fill /></Slot>
                <Slot $w={6}><Caret $c="#aaa" /></Slot>
                <Slot $w={22}><FontGlyph $size={15} $serif $bold $c="#777">A</FontGlyph></Slot>
                <Slot $w={12}><Caret $c="#aaa" /></Slot>
              </Line>
            </Stack>
          </GroupBody>
          <GroupLabel $launch>Font<Launcher /></GroupLabel>
        </Group>

        <Group $w={166}>
          <GroupBody $pl={6}>
            <Stack $top={11} $gap={7}>
              <Line>
                <Slot $w={23}><Bars kind="top" /></Slot>
                <Slot $w={23}><Bars kind="mid" /></Slot>
                <Slot $w={23}><Bars kind="bot" /></Slot>
                <Slot $w={22}><Orient /></Slot>
                <Slot $w={10}><Caret $c="#bbb" /></Slot>
                <Sep $w={21} />
                <Slot $w={30}><Wrap /></Slot>
              </Line>
              <Line>
                <Slot $w={23}><Bars kind="l" /></Slot>
                <Slot $w={23}><Bars kind="c" /></Slot>
                <Slot $w={23}><Bars kind="r" /></Slot>
                <Slot $w={23}><Bars kind="in" /></Slot>
                <Slot $w={23}><Bars kind="out" /></Slot>
                <Sep $w={6} />
                <Slot $w={26}><Merge /></Slot>
                <Slot $w={6}><Caret $c="#aaa" /></Slot>
              </Line>
            </Stack>
          </GroupBody>
          <GroupLabel $launch>Alignment<Launcher /></GroupLabel>
        </Group>

        <Group $w={143}>
          <GroupBody $pl={5}>
            <Stack $top={11} $gap={7}>
              <Combo $w={133} $off>&nbsp;<Caret $c="#888" /></Combo>
              <Line>
                <Slot $w={22} $dim><FontGlyph $size={14} $bold $c="#8a8a8a">$</FontGlyph></Slot>
                <Slot $w={12}><Caret /></Slot>
                <Slot $w={22}><FontGlyph $size={13} $c="#8a8a8a">%</FontGlyph></Slot>
                <Slot $w={24}><FontGlyph $size={13} $bold $c="#666">,</FontGlyph></Slot>
                <Sep $w={4} />
                <Slot $w={32}><DecimalGlyph>←.0<br />.00</DecimalGlyph></Slot>
                <Slot $w={16}><DecimalGlyph>.00<br />→.0</DecimalGlyph></Slot>
              </Line>
            </Stack>
          </GroupBody>
          <GroupLabel $launch>Number<Launcher /></GroupLabel>
        </Group>

        <Group $w={175}>
          <GroupBody $pl={5}>
            <BigBtn $w={68} $dim><BigIcon><CondIcon /></BigIcon><BigText>Conditional<br />Formatting <Caret $c="#aaa" /></BigText></BigBtn>
            <BigBtn $w={56} $dim><BigIcon><TableIcon /></BigIcon><BigText>Format<br />as Table <Caret $c="#aaa" /></BigText></BigBtn>
            <BigBtn $w={42} $dim><BigIcon><StylesIcon /></BigIcon><BigText>Cell<br />Styles <Caret $c="#aaa" /></BigText></BigBtn>
          </GroupBody>
          <GroupLabel>Styles</GroupLabel>
        </Group>

        <Group $w={80}>
          <GroupBody $pl={8}>
            <Stack $top={3}>
              <CellLine $dim><InsertIcon />Insert <Caret $c="#888" /></CellLine>
              <CellLine $dim><DeleteIcon />Delete <Caret $c="#888" /></CellLine>
              <CellLine><FormatIcon />Format <Caret $c="#444" /></CellLine>
            </Stack>
          </GroupBody>
          <GroupLabel>Cells</GroupLabel>
        </Group>

        <Group $w={125}>
          <GroupBody $pl={8}>
            <NarrowStack $top={3}>
              <CellLine $gap={7}><Slot $w={16}><FontGlyph $size={15} $serif $c="#555">Σ</FontGlyph></Slot><Caret /></CellLine>
              <CellLine $gap={4}><FillDown /><Caret /></CellLine>
              <CellLine $gap={3}><Eraser /><Caret /></CellLine>
            </NarrowStack>
            <BigBtn $w={43} $dim><BigIcon><SortIcon /></BigIcon><BigText>Sort &amp;<br />Filter <Caret $c="#aaa" /></BigText></BigBtn>
            <BigBtn $w={42}><BigIcon><FindIcon /></BigIcon><BigText>Find &amp;<br />Select <Caret $c="#444" /></BigText></BigBtn>
          </GroupBody>
          <GroupLabel>Editing</GroupLabel>
        </Group>
      </Ribbon>

      <Strip $h={3} />
      <FormulaBar>
        <NameBox>AW356<Caret $c="#222" /></NameBox>
        <FxPill><FxDot /><FxText>fx</FxText></FxPill>
        <FormulaInput />
        <FormulaExpand><svg width="8" height="6" viewBox="0 0 8 6"><path d="M1 1l3 3 3-3" fill="none" stroke="#555" strokeWidth="1.6" /></svg></FormulaExpand>
      </FormulaBar>
      <Strip $h={4} />

      <SheetWrap>
        <Sheet>
          <Board>
            <TitleRow>
              <FaceBtn><IeIcon /></FaceBtn>
              <FaceBtn>?</FaceBtn>
              <TitleCaption>Bevel gearing with straight, oblique and curved teeth [mm/DIN]</TitleCaption>
            </TitleRow>
            <HeadRow>
              <HeadInfo>i</HeadInfo>
              <div>Calculation without errors.</div>
              <HeadCol>Pinion</HeadCol>
              <HeadCol>Gear</HeadCol>
              <HeadCol />
            </HeadRow>
            <AddRow>
              <AddGrey />
              <AddBtn>+</AddBtn>
              <AddTitle>Additions section</AddTitle>
            </AddRow>

            <SectionHead n="13.0" t="Power, warming-up, gearbox surface" gap={3} h={22} />
            {sec13.map(r => (
              <Row key={r.n}>
                <Num>{r.n}</Num>
                <Label>{r.t}</Label>
                <Cell $span={2} $fill={r.w ? '#fff' : undefined}>{r.v}</Cell>
                <Unit>{r.u}</Unit>
              </Row>
            ))}

            <SectionHead n="14.0" t="Preliminary design of shaft diameters (steel)" gap={2} h={22} />
            <Row>
              <Num />
              <SubHead>Recommended shaft diameter for:</SubHead>
            </Row>
            <Row>
              <Num>14.1</Num>
              <Label $indent={21}>- Main power-transmitting shafts<span>DA</span></Label>
              <Cell>95.57</Cell>
              <Cell>128.89</Cell>
              <Unit>[mm]</Unit>
            </Row>
            <Row>
              <Num>14.2</Num>
              <Label $indent={21}>- Small, short shafts<span>DB</span></Label>
              <Cell>74.27</Cell>
              <Cell>100.16</Cell>
              <Unit>[mm]</Unit>
            </Row>

            <SectionHead n="15.0" t="Auxiliary calculations" gap={3} h={21} />
            {sec15.map((r, i) => (
              <Row key={r.n}>
                <Num>{r.n}</Num>
                <Label>{r.t}<span>{r.s}</span></Label>
                <Cell $fill="#fff">{r.a}</Cell>
                <Cell $fill="#fff">{r.b}</Cell>
                <Result><span>=</span><span>{r.r}</span></Result>
                <OkBtn>OK</OkBtn>
                {i === 2 && <ActiveCell />}
              </Row>
            ))}

            <SectionHead n="16.0" t="Graphical output, CAD systems" gap={3} h={21} />
            <CadBlock>
              <CadLeft>
                <CadTop>
                  <div>
                    <ComboRow>
                      <Num>16.1</Num>
                      <div>2D drawing output to:</div>
                      <SheetCombo>DXF File<ComboArrow><Caret $big $c="#000" /></ComboArrow></SheetCombo>
                    </ComboRow>
                    <ComboRow>
                      <Num>16.2</Num>
                      <div>2D Drawing scale</div>
                      <SheetCombo>Automatic<ComboArrow><Caret $big $c="#000" /></ComboArrow></SheetCombo>
                    </ComboRow>
                    <ComboRow>
                      <Num>16.3</Num>
                      <div>Detail:</div>
                      <SheetCombo>Gear<ComboArrow><Caret $big $c="#000" /></ComboArrow></SheetCombo>
                    </ComboRow>
                  </div>
                  <ShapeBtns>
                    <ShapeBtn><Shape1 /></ShapeBtn>
                    <ShapeBtn><Shape2 /></ShapeBtn>
                    <ShapeBtn><Shape3 /></ShapeBtn>
                  </ShapeBtns>
                </CadTop>
                <ToolRow>
                  <Num>16.4</Num>
                  <Label>Radius of the machining tool (for 3D model)<span>R</span></Label>
                  <Cell>175.5</Cell>
                  <Cell $fill="#ccffcc">175.5</Cell>
                  <UnitInline $pl={5}><CheckBox><Check /></CheckBox>[mm]</UnitInline>
                </ToolRow>
                <ToolRow>
                  <Num />
                  <Label />
                  <HeadMid>Pinion</HeadMid>
                  <HeadMid>Gear</HeadMid>
                </ToolRow>
                <ToolRow>
                  <Num>16.4</Num>
                  <Label>Amount of the inner offset<span>a</span></Label>
                  <Cell>5.584</Cell>
                  <Cell>6.825</Cell>
                  <UnitInline $pl={7}><LowCheck><Check /></LowCheck>[mm]</UnitInline>
                </ToolRow>
                <ToolRow>
                  <Num>16.5</Num>
                  <Label>Amount of the outer offset<span>b</span></Label>
                  <Cell>15.357</Cell>
                  <Cell>23.036</Cell>
                  <UnitInline $pl={23}>[mm]</UnitInline>
                </ToolRow>
              </CadLeft>
              <Diagram><GearDiagram /></Diagram>
            </CadBlock>

            <BomRow>
              <Num>16.6</Num>
              <BomHead>Text description (Information for BOM)</BomHead>
              <BomTitle>Pinion</BomTitle>
            </BomRow>
            <Bom lines={['Bevel gear - Pinion', 'z1=18, mmn=10, beta=30', 'Material: Ck 60']} />
            <BomRow>
              <Num />
              <div />
              <BomTitle>Gear</BomTitle>
            </BomRow>
            <Bom lines={['Bevel gear - Gear', 'z2=45, mmn=10, beta=30', 'Material: Ck 60']} />
          </Board>
          <FrozenLine />
          <Watermark>SOFTPEDIA</Watermark>
        </Sheet>
        <VScroll>
          <ScrollEnd><svg width="10" height="6"><path d="M5 0l5 6H0z" fill="#555" /></svg></ScrollEnd>
          <VTrack><VThumb><MiniLines /></VThumb></VTrack>
          <ScrollEnd><svg width="10" height="6"><path d="M5 6l5-6H0z" fill="#555" /></svg></ScrollEnd>
        </VScroll>
      </SheetWrap>

      <TabsBar>
        <NavArrows>
          <ArrowPiece dir="l" stop />
          <ArrowPiece dir="l" />
          <ArrowPiece dir="r" />
          <ArrowPiece dir="r" stop />
        </NavArrows>
        {tabs.map(([name, w], i) => <SheetTab key={name} $w={w} $on={i === 0}>{name}</SheetTab>)}
        <SheetTab $w={36}>
          <svg width="15" height="14" viewBox="0 0 15 14">
            <path d="M3 3h11v10H3z" fill="#eef3fb" stroke="#7d94b8" />
            <path d="M4 0l1 2 2-1-1 2 2 1-2 .5 1 2-2-1-1 2-.5-2-2 1 1-2-2-.5 2-1-1-2 2 1z" fill="#f0b030" />
          </svg>
        </SheetTab>
        <TabFill />
        <Splitter />
        <HScroll>
          <Slot $w={14}><svg width="6" height="10"><path d="M6 0v10L0 5z" fill="#555" /></svg></Slot>
          <HThumb><MiniLines /></HThumb>
          <TabFill />
          <Slot $w={14}><svg width="6" height="10"><path d="M0 0v10l6-5z" fill="#555" /></svg></Slot>
          <Slot $w={16} />
        </HScroll>
      </TabsBar>

      <StatusBar>
        <Ready>Ready</Ready>
        <ViewGroup>
          <ViewBtn $on>
            <svg width="13" height="11"><path d="M.5.5h12v10H.5zM4.5.5v10M8.5.5v10M.5 3.5h12M.5 7h12" fill="#fff" stroke="#555" /></svg>
          </ViewBtn>
          <ViewBtn>
            <svg width="12" height="12"><rect x=".5" y=".5" width="11" height="11" fill="#eee" stroke="#666" /><path d="M3 3h6v6H3z" fill="#fff" stroke="#999" /></svg>
          </ViewBtn>
          <ViewBtn>
            <svg width="14" height="12"><path d="M.5.5h13v11H.5z" fill="#eee" stroke="#666" /><path d="M5 .5v8h4V.5" fill="#fff" stroke="#666" /></svg>
          </ViewBtn>
          <Zoom>100%</Zoom>
          <ZoomBtn>−</ZoomBtn>
          <ZoomTrack><ZoomThumb /></ZoomTrack>
          <ZoomBtn>+</ZoomBtn>
          <Grip>
            <svg width="9" height="9"><path d="M7 1h1v1H7zM4 4h1v1H4zM7 4h1v1H7zM1 7h1v1H1zM4 7h1v1H4zM7 7h1v1H7z" fill="#8d9095" /></svg>
          </Grip>
        </ViewGroup>
      </StatusBar>
    </Win>
  )
}
